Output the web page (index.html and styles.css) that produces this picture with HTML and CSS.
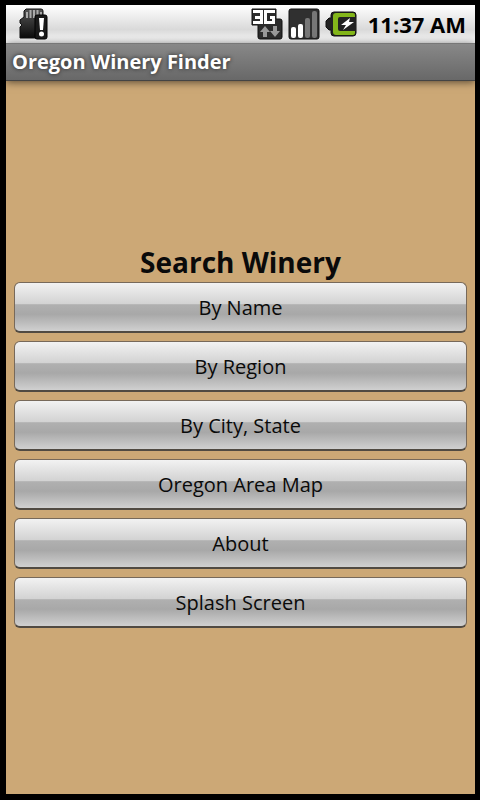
FILE: index.html
```html
<!DOCTYPE html>
<html lang="en">
<head>
    <meta charset="UTF-8">
    <meta name="viewport" content="width=device-width, initial-scale=1.0">
    <title>Oregon Winery Finder</title>
    <link rel="stylesheet" href="styles.css">
</head>
<body>
    <div class="screen">
        <div class="status-bar">
            <svg class="icon-sd" width="30" height="34" viewBox="0 0 30 34" aria-label="SD card">
                <defs>
                    <linearGradient id="dark" x1="0" y1="0" x2="0" y2="1">
                        <stop offset="0" stop-color="#555"/>
                        <stop offset="1" stop-color="#0c0c0c"/>
                    </linearGradient>
                </defs>
                <path d="M7 2h15q2 0 2 2v27H1V20l2-2-2-2v-3l4-3V4z" fill="url(#dark)" stroke="#111"/>
                <path d="M8 5v6M11.500 3v8M15 3v8M18.500 3v6M22 5v4" stroke="#aaa" stroke-width="2"/>
                <rect x="16" y="8" width="12" height="24" rx="2" fill="#1a1a1a" stroke="#000"/>
                <path d="M20 11h5l-1 12h-3z" fill="#fff"/>
                <circle cx="22.500" cy="27" r="2.500" fill="#fff"/>
            </svg>
            <svg class="icon-network" width="32" height="32" viewBox="0 0 32 32" aria-label="3G">
                <path d="M1 1h24v10h4q2 0 2 2v16q0 2-2 2H9q-2 0-2-2V17H1z" fill="#2c2c2c" stroke="#111"/>
                <path d="M2 2h10v14H2v-3h7v-2H4V8h5V5H2z" fill="#fff"/>
                <path d="M13 2h11v3h-8v8h5v-2h-2V8h5v8H13z" fill="#fff"/>
                <path d="M14 18l5 6h-3v5h-4v-5H9z" fill="#999"/>
                <path d="M24 29l-5-6h3v-5h4v5h3z" fill="#999"/>
            </svg>
            <svg width="32" height="32" viewBox="0 0 32 32" aria-label="Signal">
                <rect x="1" y="1" width="30" height="30" rx="2" fill="#303030" stroke="#111"/>
                <rect x="3" y="19" width="5" height="11" rx="2" fill="#fff"/>
                <rect x="10" y="16" width="5" height="14" rx="2" fill="#fff"/>
                <rect x="17" y="10" width="5" height="20" rx="2" fill="#777"/>
                <rect x="24" y="3" width="5" height="27" rx="2" fill="#777"/>
            </svg>
            <svg class="icon-battery" width="32" height="26" viewBox="0 0 32 26" aria-label="Battery charging">
                <path d="M9 1h19q3 0 3 3v18q0 3-3 3H9q-3 0-3-3v-3H4l-3-3v-6l3-3h2V4q0-3 3-3z" fill="#222" stroke="#111"/>
                <path d="M11 2h17q2 0 2 2v18q0 2-2 2H11q-3 0-3-3V5q0-3 3-3z" fill="#83b61a"/>
                <path d="M15 6h16v14H15q-2 0-2-2V8q0-2 2-2z" fill="#222"/>
                <path d="M25 7l-9 7h5l-3 5 11-8h-5z" fill="#fff"/>
            </svg>
            <span class="clock">11:37 AM</span>
        </div>
        <header class="title-bar">Oregon Winery Finder</header>
        <main class="content">
            <h1 class="heading">Search Winery</h1>
            <div class="menu">
                <button class="menu-button" type="button">By Name</button>
                <button class="menu-button" type="button">By Region</button>
                <button class="menu-button" type="button">By City, State</button>
                <button class="menu-button" type="button">Oregon Area Map</button>
                <button class="menu-button" type="button">About</button>
                <button class="menu-button" type="button">Splash Screen</button>
            </div>
        </main>
    </div>
</body>
</html>
```

FILE: styles.css
```css
* {
    box-sizing: border-box;
}
body {
    margin: 0;
    background-color: #000;
    font-family: 'Open Sans', 'Noto Sans', sans-serif;
}
.screen {
    display: flex;
    flex-direction: column;
    min-height: 100vh;
    border: 5px solid #000;
    border-left-width: 6px;
    border-bottom-width: 6px;
}
.status-bar {
    display: flex;
    align-items: center;
    gap: 5px;
    height: 38px;
    padding: 0 9px 0 13px;
    background: linear-gradient(#fff, #d9d9d9 65%, #fcfcfc);
}
.icon-sd {
    margin-right: auto;
}
.icon-battery {
    margin-right: 6px;
}
.clock {
    color: #000;
    font-size: 22px;
    font-weight: 700;
    line-height: 38px;
}
.title-bar {
    position: relative;
    height: 38px;
    padding: 0 6px;
    border-top: 1px solid #777;
    border-bottom: 1px solid #444;
    background: linear-gradient(#888, #686868);
    box-shadow: 0 1px 8px rgba(0, 0, 0, 0.6);
    color: #fff;
    font-size: 20px;
    font-weight: 700;
    line-height: 36px;
    text-shadow: 0 0 4px #222;
}
.content {
    display: flex;
    flex: 1;
    flex-direction: column;
    justify-content: center;
    padding: 0 8px;
    background-color: #cca876;
}
.heading {
    margin: 0;
    color: #0a0a0a;
    font-size: 28px;
    font-weight: 700;
    line-height: 40px;
    text-align: center;
}
.menu {
    display: flex;
    flex-direction: column;
    gap: 8px;
    padding-bottom: 5px;
}
.menu-button {
    height: 51px;
    padding: 1px 12px 0;
    border: 1px solid #77695a;
    border-bottom: 2px solid #504a42;
    border-radius: 6px;
    background: linear-gradient(#f2f2f2, #d2d2d2 44%, #b0b0b0 45%, #a8a8a8 65%, #d0d0d0);
    color: #0a0a0a;
    font-family: inherit;
    font-size: 20px;
    cursor: pointer;
}
.menu-button:active {
    background: linear-gradient(#ffd27a, #ff9d00);
}
```
